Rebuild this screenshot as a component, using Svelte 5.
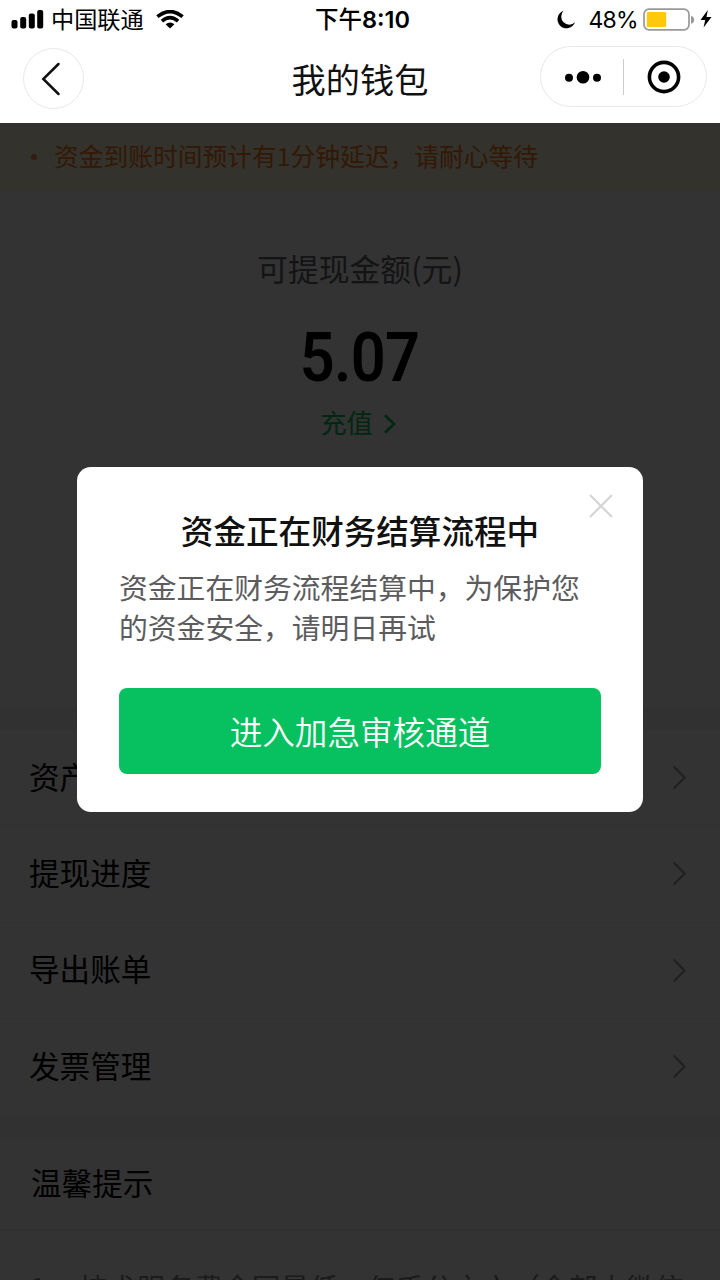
<script>
  const items = ['资产明细', '提现进度', '导出账单', '发票管理'];
</script>

<div class="screen">
  <header>
    <div class="status">
      <div class="side">
        <svg class="signal" width="33" height="20" viewBox="0 0 33 20">
          <rect x="0.5" y="10" width="6" height="8.5" rx="2" />
          <rect x="9.2" y="7" width="6" height="11.5" rx="2" />
          <rect x="17.8" y="3.5" width="6" height="15" rx="2" />
          <rect x="26.2" y="0" width="6" height="18.5" rx="2" />
        </svg>
        <span class="carrier">中国联通</span>
        <svg class="wifi" width="28" height="20" viewBox="0 0 28 20">
          <g fill="none" stroke="#000" stroke-width="3.6">
            <path d="M1.4 6.7 Q14 -3.6 26.6 6.7" />
            <path d="M5.9 11.2 Q14 4.2 22.1 11.2" />
          </g>
          <path d="M9.6 14.3 Q14 10.6 18.4 14.3 L14 18.6Z" />
        </svg>
      </div>
      <div class="time"><span>下午</span><b>8:10</b></div>
      <div class="side right">
        <svg class="moon" width="19" height="19" viewBox="0 0 19 19">
          <path d="M6.6 0.8 A9 9 0 1 0 18 12.3 A8 8 0 0 1 6.6 0.8Z" />
        </svg>
        <span class="percent">48%</span>
        <svg class="battery" width="52" height="24" viewBox="0 0 52 24">
          <rect x="1" y="1.2" width="45" height="20.6" rx="5" fill="#fff" stroke="#999" stroke-width="1.7" />
          <rect x="3.8" y="4" width="19.4" height="15" rx="1.5" fill="#fdc90a" />
          <path d="M48 7.7 Q51.2 8.7 51.2 11.7 Q51.2 14.7 48 15.7Z" fill="#999" />
        </svg>
        <svg class="bolt" width="12" height="19" viewBox="0 0 12 19">
          <path d="M7.8 0 L0.5 10 H5.2 L3.6 17.5 L11.5 7 H6.5Z" />
        </svg>
      </div>
    </div>
    <nav>
      <button class="back" aria-label="返回">
        <svg width="20" height="34" viewBox="0 0 20 34">
          <path d="M17.5 2 L2.3 17 L17.5 32" fill="none" stroke="#111" stroke-width="2.5" stroke-linecap="round" />
        </svg>
      </button>
      <h1>我的钱包</h1>
      <div class="capsule">
        <svg width="38" height="14" viewBox="0 0 38 14">
          <circle cx="5" cy="7.8" r="4" /><circle cx="19" cy="7.3" r="6.3" /><circle cx="33" cy="7.8" r="4" />
        </svg>
        <i></i>
        <svg width="34" height="34" viewBox="0 0 34 34">
          <circle cx="17" cy="17" r="14.6" fill="none" stroke="#000" stroke-width="3.6" /><circle cx="17" cy="17" r="5.8" />
        </svg>
      </div>
    </nav>
  </header>

  <main>
    <div class="notice"><i></i><span>资金到账时间预计有1分钟延迟，请耐心等待</span></div>
    <section class="balance">
      <p class="label">可提现金额(元)</p>
      <p class="amount">5.07</p>
      <p class="recharge"><span>充值</span>
        <svg width="13" height="20" viewBox="0 0 13 20">
          <path d="M2 1.2 L11 10 L2 18.8" fill="none" stroke="#07c160" stroke-width="2.6" />
        </svg>
      </p>
    </section>
    <ul>
      {#each items as item}
        <li>
          <span>{item}</span>
          <svg width="15" height="25" viewBox="0 0 15 25">
            <path d="M1.7 1.5 L12.5 12.5 L1.7 23.5" fill="none" stroke="#a0a0a0" stroke-width="2.2" />
          </svg>
        </li>
      {/each}
    </ul>
    <section class="tips">
      <h2>温馨提示</h2>
      <p><span>1、</span>技术服务费全网最低，仅千分之六（全部由微信</p>
    </section>

    <div class="mask">
      <div class="dialog">
        <svg class="close" width="24" height="24" viewBox="0 0 24 24">
          <path d="M1 1 L23 23 M23 1 L1 23" fill="none" stroke="#d5d5d5" stroke-width="2.2" />
        </svg>
        <h3>资金正在财务结算流程中</h3>
        <p>资金正在财务流程结算中，为保护您的资金安全，请明日再试</p>
        <button>进入加急审核通道</button>
      </div>
    </div>
  </main>
</div>

<style>
  :global(body) { margin: 0; background: #fff; }
  * { box-sizing: border-box; }
  p, h1, h2, h3, ul { margin: 0; padding: 0; font-weight: 400; }
  button { font-family: inherit; padding: 0; border: 0; }
  svg { display: block; flex: none; }
  .screen {
    width: 720px; height: 1280px; overflow: hidden; display: flex; flex-direction: column;
    font-family: "Noto Sans CJK SC", sans-serif; color: #000; background: #fff;
  }
  header { height: 123px; flex: none; }
  .status { height: 40px; display: grid; grid-template-columns: 1fr auto 1fr; align-items: center; padding: 0 9px 0 11px; }
  .side { display: flex; align-items: center; height: 40px; }
  .signal, .wifi, .bolt { margin-top: -1px; }
  .carrier { font-size: 23.2px; line-height: 38px; margin: -4px 0 0 7px; }
  .wifi { margin-left: 12px; }
  .time { display: flex; align-items: center; height: 40px; font-size: 23.5px; font-weight: 500; line-height: 38px; white-space: nowrap; }
  .time span { margin-top: -4px; }
  .time b { font-family: Inter, sans-serif; font-weight: 600; font-size: 23.5px; line-height: 40px; margin: -1px -3px 0 0; }
  .right { justify-content: flex-end; }
  .percent { font-family: Inter, sans-serif; font-size: 23px; line-height: 38px; margin: 0 0 0 12px; letter-spacing: -.7px; }
  .moon { margin-top: -2px; }
  .battery { margin-left: 6px; margin-top: -1px; }
  .bolt { margin-left: 5px; }
  .right { margin-right: -1px; }
  .percent { margin-right: -1px; }
  nav { height: 77px; display: grid; grid-template-columns: 1fr auto 1fr; align-items: center; padding: 0 13px 0 23px; }
  .back { width: 61px; height: 61px; border-radius: 50%; border: 1px solid #e8e8e8; background: #fff; display: flex; align-items: center; justify-content: center; padding-right: 6px; }
  h1 { font-size: 34.2px; line-height: 50px; color: #111; margin-left: -10px; margin-top: -1px; }
  .capsule { justify-self: end; width: 167px; height: 61px; border: 1px solid #e8e8e8; border-radius: 31px; display: flex; align-items: center; padding-left: 23px; margin-top: -4px; }
  .capsule i { width: 1px; height: 36px; background: #ccc; margin: 0 23px 0 21px; }

  main { position: relative; flex: 1; min-height: 0; overflow: hidden; display: flex; flex-direction: column; }
  .notice { height: 68px; flex: none; background: #fffbdb; color: #ff7a20; display: flex; align-items: center; padding: 0 0 0 31px; font-size: 24.75px; line-height: 64px; }
  .notice span { padding-bottom: 4px; }
  .notice i { width: 6px; height: 6px; border-radius: 50%; background: #ff8c5a; margin-right: 17px; }
  .balance { height: 517px; flex: none; display: flex; flex-direction: column; align-items: center; padding-top: 55px; }
  .label { font-size: 30.8px; line-height: 44px; color: #666; }
  .amount { font: 600 68px/80px Roboto, sans-serif; margin-top: 28px; transform: scaleX(.9); letter-spacing: -.7px; }
  .recharge { font-size: 26.3px; line-height: 40px; margin-top: 7px; color: #07c160; display: flex; align-items: center; gap: 10px; margin-left: -4px; }
  .recharge span { margin-top: -3px; }
  ul { list-style: none; border-top: 22px solid #f2f2f2; border-bottom: 22px solid #f2f2f2; flex: none; height: 429px; }
  li { height: 96.25px; border-bottom: 1px solid #ededed; display: flex; align-items: center; justify-content: space-between; padding: 0 33px 0 29px; font-size: 30.6px; }
  li span { padding-bottom: 4px; }
  li:last-child { border: 0; }
  .tips h2 { height: 93px; line-height: 90px; font-size: 30.6px; padding-left: 31px; border-bottom: 1px solid #ebebeb; }
  .tips p { font-size: 28.8px; line-height: 44px; padding: 35px 0 0 30px; color: #888; white-space: nowrap; display: flex; }
  .tips p span { width: 49px; }

  .mask { position: absolute; inset: 0; background: rgba(0, 0, 0, .8); display: flex; justify-content: center; align-items: flex-start; padding-top: 344px; }
  .dialog { position: relative; width: 566px; height: 345px; background: #fff; border-radius: 14px; padding: 40px 42px 0; }
  .close { position: absolute; right: 30px; top: 27px; }
  h3 { font-size: 32.6px; line-height: 46px; font-weight: 500; text-align: center; color: #111; white-space: nowrap; }
  .dialog p { font-size: 28.8px; line-height: 40.3px; color: #5c5c5e; margin: 14px -2px 0 0; }
  .dialog button { display: block; width: 482px; height: 86px; margin-top: 40px; border-radius: 8px; background: #07c160; color: #fff; font-size: 32.6px; font-weight: 350; line-height: 85px; }
</style>
